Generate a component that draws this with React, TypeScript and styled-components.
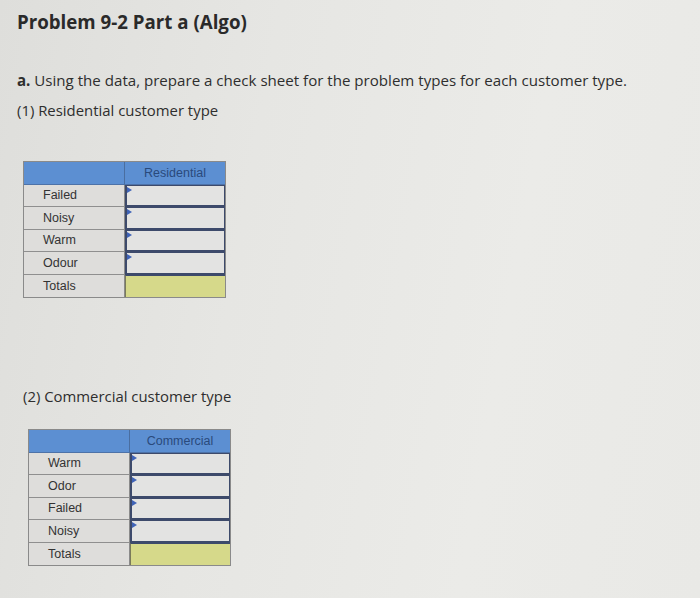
import React from "react";
import styled, { createGlobalStyle } from "styled-components";

const Global = createGlobalStyle`
  html, body { margin: 0; padding: 0; }
  body {
    width: 700px;
    height: 598px;
    overflow: hidden;
    background: linear-gradient(100deg, #dededb 0%, #e6e6e3 35%, #ebebe8 70%, #e9e9e6 100%);
    font-family: "Open Sans", Lato, sans-serif;
    color: #2b2b2b;
  }
`;

const Page = styled.div`
  display: flex;
  flex-direction: column;
  align-items: flex-start;
  padding: 10px 0 0 17px;
`;

const Title = styled.h1`
  margin: 0;
  font-size: 18.7px;
  line-height: 24px;
  font-weight: 700;
  color: #2a2a2a;
`;

const Question = styled.p`
  margin: 36px 0 0;
  font-size: 15.1px;
  line-height: 20px;
  color: #2e2e2e;
  strong { font-weight: 700; }
`;

const Sub = styled.p<{ $indent?: number; $top: number }>`
  margin: ${(p) => p.$top}px 0 0 ${(p) => p.$indent ?? 0}px;
  font-size: 14.9px;
  line-height: 20px;
  color: #2e2e2e;
`;

const Sheet = styled.div<{ $indent: number; $top: number }>`
  margin: ${(p) => p.$top}px 0 0 ${(p) => p.$indent}px;
  display: grid;
  grid-template-columns: 101px 100px;
  grid-auto-rows: 22.5px;
  border: 1px solid #8a8a8a;
  font-family: "Liberation Sans", Arial, sans-serif;
  font-size: 12.5px;
`;

const HeadCell = styled.div<{ $label?: boolean }>`
  background: #5c8fd2;
  color: #2a4a7c;
  display: flex;
  align-items: center;
  justify-content: center;
  border-right: ${(p) => (p.$label ? "1px solid #4a6ea0" : "none")};
  border-bottom: 1px solid #4d72a8;
`;

const Label = styled.div`
  background: #dedddb;
  color: #333;
  display: flex;
  align-items: center;
  padding-left: 19px;
  border-right: 1px solid #8a8a8a;
  border-bottom: 1px solid #8f8f8f;
  &:nth-last-child(2) { border-bottom: none; }
`;

const Input = styled.div`
  position: relative;
  background: #e3e3e2;
  border: 2px solid #3d4a6b;
  border-top-width: 1px;
  border-right-width: 1px;
  &::before {
    content: "";
    position: absolute;
    left: 0;
    top: 1px;
    border-left: 5px solid #3f63b8;
    border-top: 3px solid transparent;
    border-bottom: 3px solid transparent;
  }
`;

const Total = styled.div`
  background: #d6d98a;
  border-top: 1px solid #3d4a6b;
  border-left: 1px solid #7a7a5a;
`;

type SheetProps = { heading: string; rows: string[]; indent: number; top: number };

const CheckSheet = ({ heading, rows, indent, top }: SheetProps) => (
  <Sheet $indent={indent} $top={top}>
    <HeadCell $label />
    <HeadCell>{heading}</HeadCell>
    {rows.map((r) => (
      <React.Fragment key={r}>
        <Label>{r}</Label>
        <Input />
      </React.Fragment>
    ))}
    <Label>Totals</Label>
    <Total />
  </Sheet>
);

export default function App() {
  return (
    <>
      <Global />
      <Page>
        <Title>Problem 9-2 Part a (Algo)</Title>
        <Question>
          <strong>a.</strong> Using the data, prepare a check sheet for the problem types for each customer type.
        </Question>
        <Sub $top={10}>(1) Residential customer type</Sub>
        <CheckSheet heading="Residential" rows={["Failed", "Noisy", "Warm", "Odour"]} indent={6} top={41} />
        <Sub $top={88} $indent={6}>(2) Commercial customer type</Sub>
        <CheckSheet heading="Commercial" rows={["Warm", "Odor", "Failed", "Noisy"]} indent={11} top={23} />
      </Page>
    </>
  );
}
